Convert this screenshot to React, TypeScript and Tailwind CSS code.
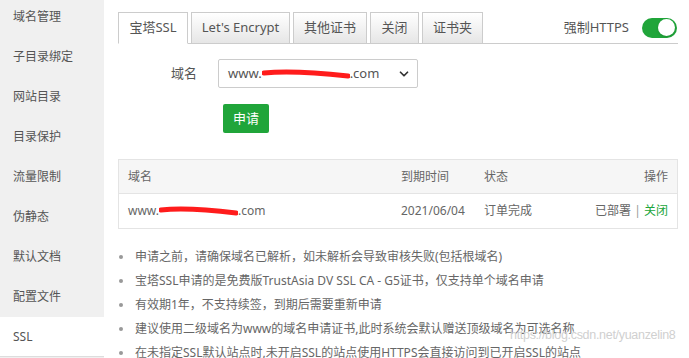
import React from "react";
import { ChevronDown } from "lucide-react";

const menu = ["域名管理", "子目录绑定", "网站目录", "目录保护", "流量限制", "伪静态", "默认文档", "配置文件", "SSL"];

const tabs = [
  { name: "宝塔SSL", w: "w-[70px]" },
  { name: "Let's Encrypt", w: "w-[99px]" },
  { name: "其他证书", w: "w-[74px]" },
  { name: "关闭", w: "w-[49px]" },
  { name: "证书夹", w: "w-[61px]" },
];

const tips = [
  "申请之前，请确保域名已解析，如未解析会导致审核失败(包括根域名)",
  "宝塔SSL申请的是免费版TrustAsia DV SSL CA - G5证书，仅支持单个域名申请",
  "有效期1年，不支持续签，到期后需要重新申请",
  "建议使用二级域名为www的域名申请证书,此时系统会默认赠送顶级域名为可选名称",
  "在未指定SSL默认站点时,未开启SSL的站点使用HTTPS会直接访问到已开启SSL的站点",
];

function Scribble({ w }: { w: string }) {
  return (
    <span className={`relative inline-block h-[10px] ${w}`}>
      <svg className="absolute inset-0 w-full h-full" viewBox="0 0 88 10" preserveAspectRatio="none">
        <path d="M2 4 C20 2, 50 3, 86 7" stroke="#ff1c1c" strokeWidth="5" strokeLinecap="round" fill="none" />
      </svg>
    </span>
  );
}

export default function App() {
  return (
    <div
      className="relative flex w-[689px] h-[358px] overflow-hidden bg-white text-[#666]"
      style={{ fontFamily: '"Noto Sans", "Noto Sans CJK SC", sans-serif' }}
    >
      <div className="w-[104px] shrink-0 bg-[#f0f0f0]">
        <div className="-mt-[3px] flex flex-col">
          {menu.map((m) => (
            <div
              key={m}
              className={`h-10 flex items-center pl-[13px] text-[12px] text-[#555] ${
                m === "SSL" ? "bg-white border-b border-[#ddd]" : ""
              }`}
            >
              {m}
            </div>
          ))}
        </div>
      </div>

      <div className="flex-1 pl-[14px] pr-[11px] pt-[12px]">
        <div className="flex items-end h-[32px] border-b border-[#ccc]">
          {tabs.map((t, i) => (
            <div
              key={t.name}
              className={`${t.w} mr-[3px] flex items-center justify-center border border-[#ccc] text-[13px] text-[#555] ${
                i === 0
                  ? "bg-white border-b-white -mb-px h-[32px]"
                  : "border-b-0 bg-gradient-to-b from-white to-[#e6e6e6] h-[31px]"
              }`}
            >
              {t.name}
            </div>
          ))}
          <div className="ml-auto self-center flex items-center gap-[13px] pr-[1px]">
            <span className="text-[13px] text-[#555]">强制HTTPS</span>
            <div className="w-[35px] h-[20px] rounded-full bg-[#20a53a] flex items-center justify-end pr-[2px]">
              <div className="w-[17px] h-[17px] rounded-full bg-white shadow" />
            </div>
          </div>
        </div>

        <div className="flex items-center mt-[15px]">
          <div className="w-[79px] text-right text-[13px] text-[#555]">域名</div>
          <div className="ml-[21px] w-[200px] h-[29px] border border-[#ccc] rounded-[2px] flex items-center pl-[9px] pr-[6px] text-[13px] text-[#555]">
            <span>www.</span>
            <Scribble w="w-[88px]" />
            <span>.com</span>
            <ChevronDown className="ml-auto text-[#333]" size={14} strokeWidth={3} />
          </div>
        </div>

        <div className="mt-[16px] ml-[105px] w-[46px] h-[29px] rounded-[2px] bg-[#20a53a] text-white text-[13px] flex items-center justify-center">
          申请
        </div>

        <div className="mt-[26px] border border-[#e4e4e4] text-[12px]">
          <div className="flex items-center h-[34px] bg-[#f6f6f6] border-b border-[#e4e4e4] px-[9px]">
            <div className="flex-1">域名</div>
            <div className="w-[83px]">到期时间</div>
            <div className="w-[80px]">状态</div>
            <div className="w-[104px] text-right">操作</div>
          </div>
          <div className="flex items-center h-[34px] px-[9px]">
            <div className="flex-1 flex items-center">
              <span>www.</span>
              <Scribble w="w-[79px]" />
              <span>.com</span>
            </div>
            <div className="w-[83px]">2021/06/04</div>
            <div className="w-[80px]">订单完成</div>
            <div className="w-[104px] text-right">
              已部署 <span className="text-[#999]">|</span> <span className="text-[#20a53a]">关闭</span>
            </div>
          </div>
        </div>

        <ul className="mt-[16px] text-[12px] text-[#666]">
          {tips.map((t) => (
            <li key={t} className="h-[24px] flex items-center whitespace-nowrap">
              <span className="w-[4px] h-[4px] rounded-full bg-[#999] ml-[1px] mr-[12px]" />
              {t}
            </li>
          ))}
        </ul>
      </div>

      <div
        className="absolute left-[510px] top-[326px] text-[12.5px] tracking-[-0.3px] text-[#d0d0d0] whitespace-nowrap"
        style={{ fontFamily: '"Liberation Sans", sans-serif' }}
      >
        https://blog.csdn.net/yuanzelin8
      </div>
    </div>
  );
}
